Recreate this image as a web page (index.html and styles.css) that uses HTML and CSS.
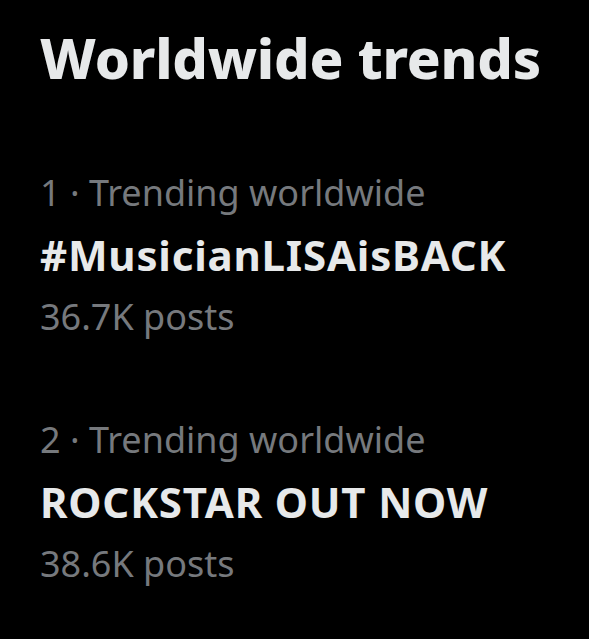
FILE: index.html
```html
<!DOCTYPE html>
<html>
<head>
<meta charset="utf-8">
<link rel="stylesheet" href="styles.css">
</head>
<body>
<main class="panel">
  <h1 class="title">Worldwide trends</h1>
  <ul class="trends">
    <li class="trend">
      <div class="meta">1 · Trending worldwide</div>
      <div class="name">#MusicianLISAisBACK</div>
      <div class="meta">36.7K posts</div>
    </li>
    <li class="trend">
      <div class="meta">2 · Trending worldwide</div>
      <div class="name">ROCKSTAR OUT NOW</div>
      <div class="meta">38.6K posts</div>
    </li>
  </ul>
</main>
</body>
</html>
```
FILE: styles.css
```css
html, body {
  margin: 0;
  padding: 0;
  background: #000;
  height: 100%;
}
body {
  font-family: "Noto Sans", "Open Sans", sans-serif;
  color: #e7e9ea;
}
.panel {
  padding: 19px 0 0 40px;
}
.title {
  margin: 0;
  font-size: 56px;
  font-weight: 800;
  line-height: 76px;
  letter-spacing: -0.2px;
}
.trends {
  list-style: none;
  margin: 67px 0 0 0;
  padding: 0;
  display: flex;
  flex-direction: column;
  gap: 61px;
}
.trend {
  display: flex;
  flex-direction: column;
}
.meta {
  font-size: 36px;
  line-height: 62px;
  color: #76797d;
}
.name {
  font-size: 42px;
  line-height: 62px;
  font-weight: 700;
  letter-spacing: 0.8px;
}
```
